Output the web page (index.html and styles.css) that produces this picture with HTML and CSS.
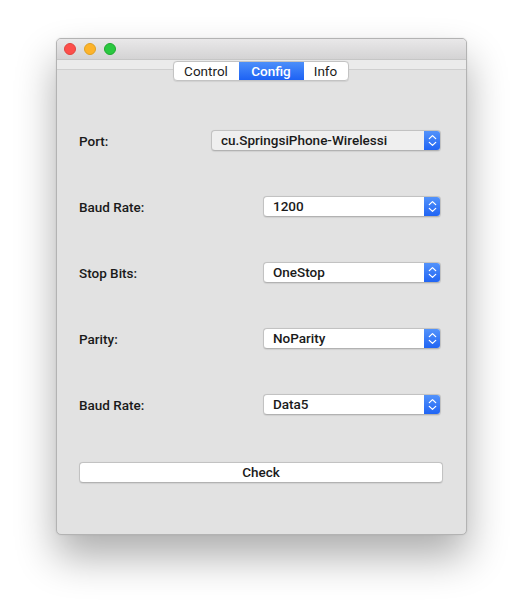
FILE: index.html
```html
<!DOCTYPE html>
<html>
<head>
<meta charset="utf-8">
<link rel="stylesheet" href="styles.css">
</head>
<body>
<div class="window">
  <div class="titlebar">
    <span class="light red"></span>
    <span class="light yellow"></span>
    <span class="light green"></span>
  </div>
  <div class="tabhead">
    <div class="tabs">
      <div class="tab">Control</div>
      <div class="tab active">Config</div>
      <div class="tab">Info</div>
    </div>
  </div>
  <div class="pane">
    <div class="row">
      <span class="label">Port:</span>
      <div class="popup wide gray"><span class="val">cu.SpringsiPhone-Wirelessi</span><span class="arrow"><svg width="17" height="21" viewBox="0 0 17 21"><path d="M5.3 8.6 L8.5 5.6 L11.7 8.6 M5.3 12.4 L8.5 15.4 L11.7 12.4" fill="none" stroke="#fff" stroke-width="1.3" stroke-linecap="round" stroke-linejoin="round"/></svg></span></div>
    </div>
    <div class="row">
      <span class="label">Baud Rate:</span>
      <div class="popup"><span class="val">1200</span><span class="arrow"><svg width="17" height="21" viewBox="0 0 17 21"><path d="M5.3 8.6 L8.5 5.6 L11.7 8.6 M5.3 12.4 L8.5 15.4 L11.7 12.4" fill="none" stroke="#fff" stroke-width="1.3" stroke-linecap="round" stroke-linejoin="round"/></svg></span></div>
    </div>
    <div class="row">
      <span class="label">Stop Bits:</span>
      <div class="popup"><span class="val">OneStop</span><span class="arrow"><svg width="17" height="21" viewBox="0 0 17 21"><path d="M5.3 8.6 L8.5 5.6 L11.7 8.6 M5.3 12.4 L8.5 15.4 L11.7 12.4" fill="none" stroke="#fff" stroke-width="1.3" stroke-linecap="round" stroke-linejoin="round"/></svg></span></div>
    </div>
    <div class="row">
      <span class="label">Parity:</span>
      <div class="popup"><span class="val">NoParity</span><span class="arrow"><svg width="17" height="21" viewBox="0 0 17 21"><path d="M5.3 8.6 L8.5 5.6 L11.7 8.6 M5.3 12.4 L8.5 15.4 L11.7 12.4" fill="none" stroke="#fff" stroke-width="1.3" stroke-linecap="round" stroke-linejoin="round"/></svg></span></div>
    </div>
    <div class="row">
      <span class="label">Baud Rate:</span>
      <div class="popup"><span class="val">Data5</span><span class="arrow"><svg width="17" height="21" viewBox="0 0 17 21"><path d="M5.3 8.6 L8.5 5.6 L11.7 8.6 M5.3 12.4 L8.5 15.4 L11.7 12.4" fill="none" stroke="#fff" stroke-width="1.3" stroke-linecap="round" stroke-linejoin="round"/></svg></span></div>
    </div>
    <div class="button">Check</div>
  </div>
</div>
</body>
</html>
```
FILE: styles.css
```css
* { box-sizing: border-box; }
html, body { margin: 0; padding: 0; background: #ffffff; }
body {
  width: 523px;
  height: 609px;
  overflow: hidden;
  font-family: "Roboto", "Liberation Sans", sans-serif;
  font-size: 13.5px;
  color: #1a1a1a;
  padding: 38px 0 0 56px;
}
.window {
  width: 411px;
  height: 497px;
  background: #e2e2e2;
  border: 1px solid #b3b3b3;
  border-radius: 5px;
  box-shadow: 0 22px 40px rgba(0,0,0,0.32), 0 0 2px rgba(0,0,0,0.1);
  overflow: hidden;
}
.titlebar {
  height: 21px;
  background: linear-gradient(to bottom, #e9e8e9, #d4d3d4);
  border-bottom: 1px solid #c6c6c6;
  display: flex;
  align-items: center;
  gap: 8px;
  padding-left: 7px;
}
.light {
  width: 12px;
  height: 12px;
  border-radius: 50%;
}
.red { background: #fd4e4b; border: 0.5px solid #e0443e; }
.yellow { background: #fdb32a; border: 0.5px solid #dea123; }
.green { background: #2ac840; border: 0.5px solid #1fa92f; }
.tabhead {
  height: 21px;
  padding-top: 1px;
  background: linear-gradient(to bottom, #ebebeb 0, #ebebeb 9px, #cfcfcf 9px, #cfcfcf 10px, #e2e2e2 10px);
  display: flex;
  justify-content: center;
  padding-right: 2px;
}
.tabs {
  display: flex;
  height: 20px;
  border: 1px solid #c3c3c3;
  border-radius: 4px;
  background: #ffffff;
  overflow: hidden;
  box-shadow: 0 0.5px 1px rgba(0,0,0,0.08);
}
.tab {
  height: 18px;
  line-height: 18px;
  text-align: center;
  color: #1c1c1c;
  font-weight: 400;
}
.tab:first-child { width: 65px; }
.tab.active {
  width: 65px;
  color: #ffffff;
  font-weight: 500;
  background: linear-gradient(to bottom, #4c8ffa, #1d62f4);
}
.tab:last-child { width: 44px; }
.pane {
  padding: 49px 25px 0 22px;
}
.row {
  height: 21px;
  margin-bottom: 45px;
  display: flex;
  align-items: center;
  justify-content: space-between;
}
.label {
  font-weight: 500;
  color: #1a1a1a;
}
.popup {
  width: 178px;
  height: 21px;
  display: flex;
  background: #ffffff;
  border: 1px solid #c2c2c2;
  border-bottom-color: #b2b2b2;
  border-radius: 4px;
  overflow: hidden;
  box-shadow: 0 0.5px 1px rgba(0,0,0,0.08);
}
.popup.wide { width: 230px; }
.popup.gray { background: #efefef; }
.val {
  flex: 1;
  padding-left: 9px;
  line-height: 19px;
  font-weight: 500;
  color: #1a1a1a;
  white-space: nowrap;
  overflow: hidden;
}
.arrow {
  width: 17px;
  height: 21px;
  margin: -1px -1px -1px 0;
  background: linear-gradient(to bottom, #5595fb, #1e62f3);
  display: flex;
}
.arrow svg { display: block; }
.button {
  margin-top: 47px;
  margin-right: -2px;
  height: 21px;
  background: #ffffff;
  border: 1px solid #c2c2c2;
  border-bottom-color: #b2b2b2;
  border-radius: 4px;
  text-align: center;
  line-height: 19px;
  font-weight: 500;
  color: #1a1a1a;
  box-shadow: 0 0.5px 1px rgba(0,0,0,0.08);
}
```
